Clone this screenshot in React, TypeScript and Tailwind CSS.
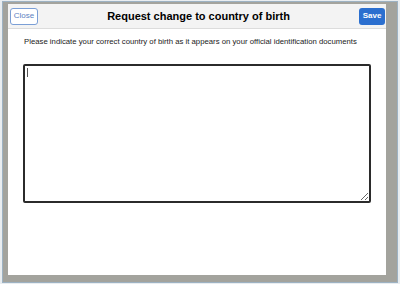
export default function App() {
  return (
    <div className="w-[400px] h-[284px] bg-[#e9edf0] pt-[1px] pl-[2px] pr-[2px] pb-[1px] font-['Liberation_Sans',Arial,sans-serif]">
      <div className="w-full h-full border border-[#9db2c3] bg-[#a3a39d] pt-[2px] pl-[5px] pr-[11px] pb-[7px]">
        <div className="w-full h-full bg-white flex flex-col">
          {/* Header */}
          <div className="h-[25px] bg-[#f3f3f3] border-b border-[#dcdcdc] flex items-center justify-between pl-[2px] pr-[1px]">
            <button className="h-[17px] w-[28px] rounded-[3px] border border-[#7b9fd6] bg-white text-[#5b82c2] text-[8px] leading-none">
              Close
            </button>
            <h1 className="text-[11px] font-bold text-black leading-none">Request change to country of birth</h1>
            <button className="h-[17px] w-[26px] rounded-[3px] bg-[#2b6fcf] text-white text-[8px] font-bold leading-none">
              Save
            </button>
          </div>

          {/* Body */}
          <div className="flex-1 pl-[15px] pr-[14px] pt-[9px]">
            <p className="pl-[1px] text-[7.75px] text-[#222] leading-none">
              Please indicate your correct country of birth as it appears on your official identification documents
            </p>
            <div className="relative mt-[18px]">
              <textarea className="block w-[348px] h-[139px] border-2 border-[#2b2b2b] rounded-[2px] bg-white outline-none" />
              <span className="absolute left-[4px] top-[4px] w-px h-[9px] bg-[#555]" />
            </div>
          </div>
        </div>
      </div>
    </div>
  );
}
